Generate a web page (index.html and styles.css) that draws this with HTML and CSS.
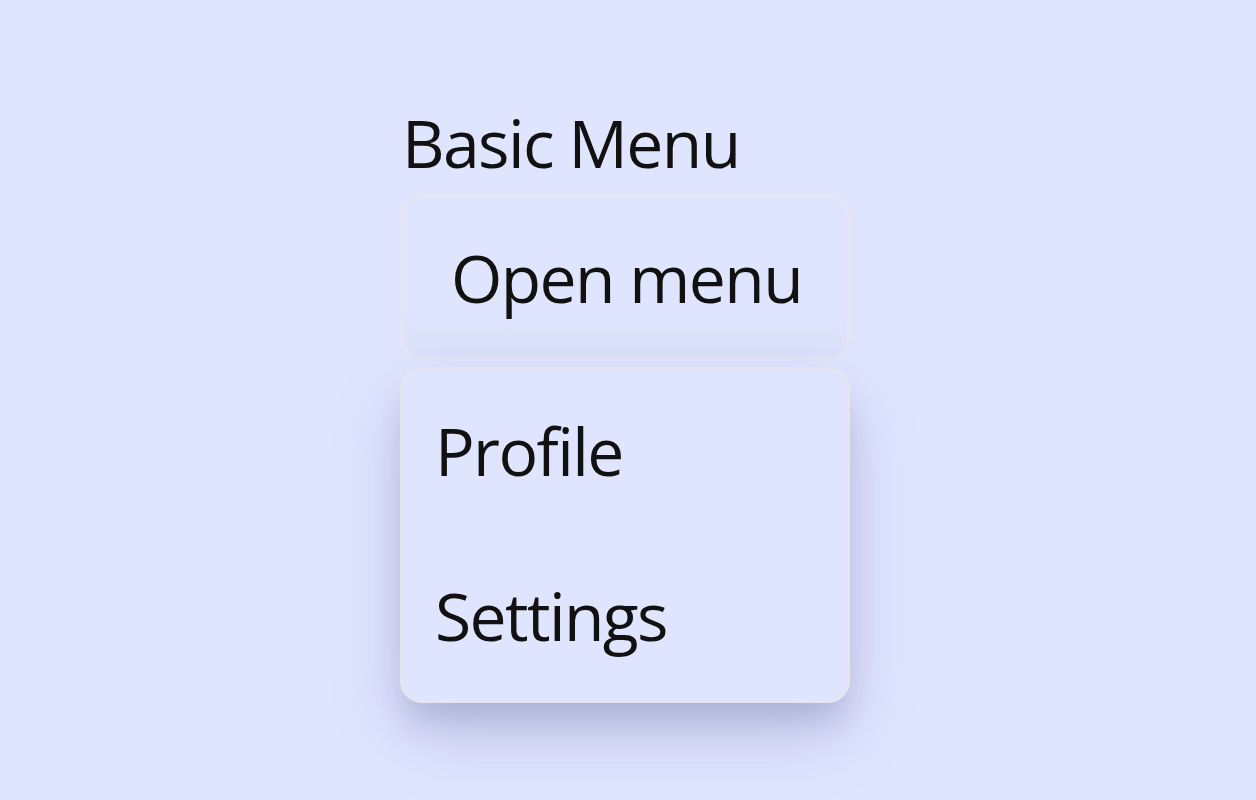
FILE: index.html
```html
<!DOCTYPE html>
<html lang="en">
<head>
<meta charset="utf-8">
<title>Basic Menu</title>
<link rel="stylesheet" href="styles.css">
</head>
<body>
<main class="page">
  <section class="demo">
    <h2 class="demo-title">Basic Menu</h2>
    <button class="menu-trigger" type="button">Open menu</button>
    <ul class="menu" role="menu">
      <li class="menu-item" role="menuitem">Profile</li>
      <li class="menu-item" role="menuitem">Settings</li>
    </ul>
  </section>
</main>
</body>
</html>
```
FILE: styles.css
```css
html, body {
  margin: 0;
  padding: 0;
  height: 100%;
}
body {
  background: #e0e5ff;
  font-family: "Open Sans", "Noto Sans", sans-serif;
  color: #111;
  overflow: hidden;
  letter-spacing: -1.6px;
}
.page {
  padding: 100px 0 0 400px;
}
.demo {
  display: flex;
  flex-direction: column;
  width: 450px;
}
.demo-title {
  margin: 0 0 10px 2px;
  font-size: 66px;
  font-weight: 400;
  line-height: 84px;
}
.menu-trigger {
  width: 449px;
  height: 166px;
  margin-left: 1px;
  background: linear-gradient(#e0e5ff 70%, #dce1fa);
  border: 3px solid #e4e6f1;
  border-radius: 22px;
  font-family: inherit;
  letter-spacing: inherit;
  font-size: 66px;
  color: #111;
  padding: 0 0 0 2px;
  text-align: center;
}
.menu {
  list-style: none;
  margin: 7px 0 0 0;
  padding: 0;
  width: 450px;
  height: 336px;
  box-sizing: border-box;
  border: 3px solid #e3e5f1;
  border-radius: 22px;
  background: #e0e5ff;
  box-shadow: 0 30px 70px rgba(50, 60, 120, 0.2), 0 24px 30px -8px rgba(50, 60, 110, 0.16);
  display: flex;
  flex-direction: column;
}
.menu-item {
  flex: 1;
  display: flex;
  align-items: center;
  padding-left: 32px;
  font-size: 66px;
  padding-bottom: 6px;
}
```
